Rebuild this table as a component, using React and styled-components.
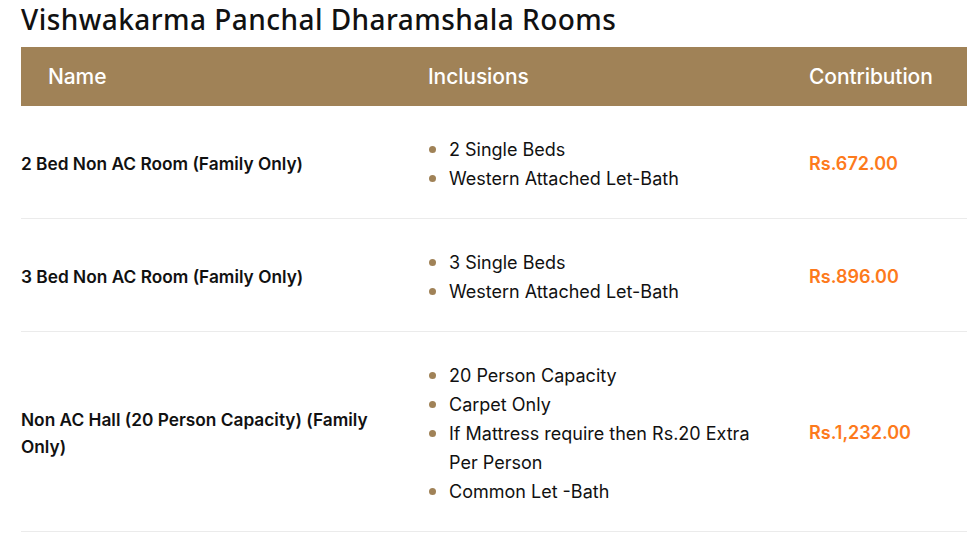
import React from 'react';
import styled, { createGlobalStyle } from 'styled-components';

const Global = createGlobalStyle`
  html, body {
    margin: 0;
    padding: 0;
    background: #fff;
    overflow: hidden;
  }
  body {
    font-family: Inter, "Noto Sans", sans-serif;
    color: #111;
  }
`;

const Page = styled.div`
  padding: 1px 0 0 21px;
  width: 1040px;
`;

const Title = styled.h2`
  margin: 0 0 10px 0;
  font-family: "Noto Sans", "Open Sans", sans-serif;
  font-size: 28px;
  font-weight: 500;
  line-height: 36px;
  color: #111;
  letter-spacing: 0.45px;
`;

const Row = styled.div`
  display: grid;
  grid-template-columns: 380px 381px 1fr;
  align-items: center;
  border-bottom: ${p => (p.$head ? 'none' : '1px solid #ebebeb')};
  background: ${p => (p.$head ? '#a08257' : 'transparent')};
  min-height: ${p => (p.$head ? '59px' : 'auto')};
`;

const HeadCell = styled.div`
  padding-left: 27px;
  color: #fff;
  font-size: 21px;
  font-weight: 500;
  letter-spacing: -0.1px;
`;

const NameCell = styled.div`
  padding: 28px 27px 26px 0;
  font-size: 17.3px;
  font-weight: 600;
  line-height: 27px;
  color: #111;
`;

const List = styled.ul`
  list-style: none;
  margin: 0;
  padding: 29px 20px 25px 48px;
`;

const Item = styled.li`
  position: relative;
  font-size: 18px;
  line-height: 29px;
  color: #111;
  &::before {
    content: '';
    position: absolute;
    left: -20px;
    top: 11px;
    width: 7px;
    height: 7px;
    border-radius: 50%;
    background: #a08257;
  }
`;

const Price = styled.div`
  padding: 2px 0 0 27px;
  font-size: 18px;
  font-weight: 600;
  color: #fd7a1c;
`;

const rooms = [
  {
    name: '2 Bed Non AC Room (Family Only)',
    items: ['2 Single Beds', 'Western Attached Let-Bath'],
    price: 'Rs.672.00',
  },
  {
    name: '3 Bed Non AC Room (Family Only)',
    items: ['3 Single Beds', 'Western Attached Let-Bath'],
    price: 'Rs.896.00',
  },
  {
    name: 'Non AC Hall (20 Person Capacity) (Family Only)',
    items: [
      '20 Person Capacity',
      'Carpet Only',
      'If Mattress require then Rs.20 Extra Per Person',
      'Common Let -Bath',
    ],
    price: 'Rs.1,232.00',
  },
];

export default function App() {
  return (
    <Page>
      <Global />
      <Title>Vishwakarma Panchal Dharamshala Rooms</Title>
      <Row $head>
        <HeadCell>Name</HeadCell>
        <HeadCell>Inclusions</HeadCell>
        <HeadCell>Contribution</HeadCell>
      </Row>
      {rooms.map(r => (
        <Row key={r.name}>
          <NameCell>{r.name}</NameCell>
          <List>
            {r.items.map(i => (
              <Item key={i}>{i}</Item>
            ))}
          </List>
          <Price>{r.price}</Price>
        </Row>
      ))}
    </Page>
  );
}
